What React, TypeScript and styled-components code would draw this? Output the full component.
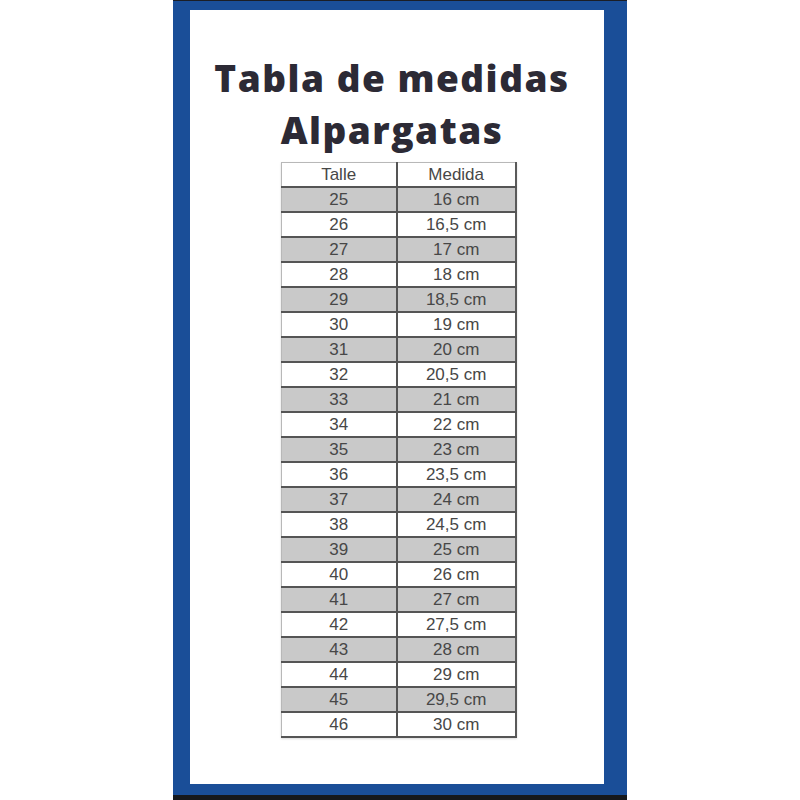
import React from "react"
import styled, { createGlobalStyle } from "styled-components"

const GlobalStyle = createGlobalStyle`
  html, body {
    margin: 0;
    padding: 0;
    background: #ffffff;
  }
`

const Page = styled.div`
  width: 800px;
  height: 800px;
  display: flex;
  justify-content: flex-start;
`

const Frame = styled.div`
  margin-left: 173px;
  width: 454px;
  height: 800px;
  box-sizing: border-box;
  display: flex;
  flex-direction: column;
  background: #1a4e98;
  border-top: 1px solid #1b1e26;
  border-bottom: 5px solid #16181c;
  padding: 9px 23px 11px 17px;
`

const Sheet = styled.div`
  flex: 1;
  background: #ffffff;
  display: flex;
  flex-direction: column;
  align-items: center;
  padding-top: 42px;
`

const Title = styled.h1`
  margin: 0 0 6px -10px;
  font-family: "Open Sans", Lato, sans-serif;
  font-weight: 800;
  font-size: 37px;
  line-height: 52px;
  letter-spacing: 1.5px;
  color: #2c2a35;
  text-align: center;
`

const Table = styled.table`
  margin-left: 3px;
  border-collapse: collapse;
  width: 236px;
  border-left: 1px solid #b8b8b8;
  border-top: 1px solid #b8b8b8;
  border-right: 2px solid #5a5a5a;
  border-bottom: 2px solid #4e4e4e;
  box-shadow: 0 1px 2px rgba(0, 0, 0, 0.15);
`

const Row = styled.tr<{ $shaded?: boolean }>`
  height: 25px;
  background: ${(p) => (p.$shaded ? "#c9c9c9" : "#ffffff")};
  border-bottom: 2px solid #555555;
`

const HeadRow = styled.tr`
  height: 24px;
  background: #ffffff;
  border-bottom: 2px solid #555555;
`

const Cell = styled.td<{ $wide?: boolean }>`
  padding: 0;
  width: ${(p) => (p.$wide ? "118px" : "116px")};
  border-right: 2px solid #555555;
  text-align: center;
  font-family: "Liberation Sans", Arial, sans-serif;
  font-size: 17px;
  line-height: 23px;
  color: #474747;
  &:last-child {
    border-right: none;
  }
`

const sizes = [
  ["25", "16 cm"],
  ["26", "16,5 cm"],
  ["27", "17 cm"],
  ["28", "18 cm"],
  ["29", "18,5 cm"],
  ["30", "19 cm"],
  ["31", "20 cm"],
  ["32", "20,5 cm"],
  ["33", "21 cm"],
  ["34", "22 cm"],
  ["35", "23 cm"],
  ["36", "23,5 cm"],
  ["37", "24 cm"],
  ["38", "24,5 cm"],
  ["39", "25 cm"],
  ["40", "26 cm"],
  ["41", "27 cm"],
  ["42", "27,5 cm"],
  ["43", "28 cm"],
  ["44", "29 cm"],
  ["45", "29,5 cm"],
  ["46", "30 cm"],
]

export default function App() {
  return (
    <Page>
      <GlobalStyle />
      <Frame>
        <Sheet>
          <Title>
            Tabla de medidas
            <br />
            Alpargatas
          </Title>
          <Table>
            <tbody>
              <HeadRow>
                <Cell>Talle</Cell>
                <Cell $wide>Medida</Cell>
              </HeadRow>
              {sizes.map(([talle, medida], i) => (
                <Row key={talle} $shaded={i % 2 === 0}>
                  <Cell>{talle}</Cell>
                  <Cell $wide>{medida}</Cell>
                </Row>
              ))}
            </tbody>
          </Table>
        </Sheet>
      </Frame>
    </Page>
  )
}
